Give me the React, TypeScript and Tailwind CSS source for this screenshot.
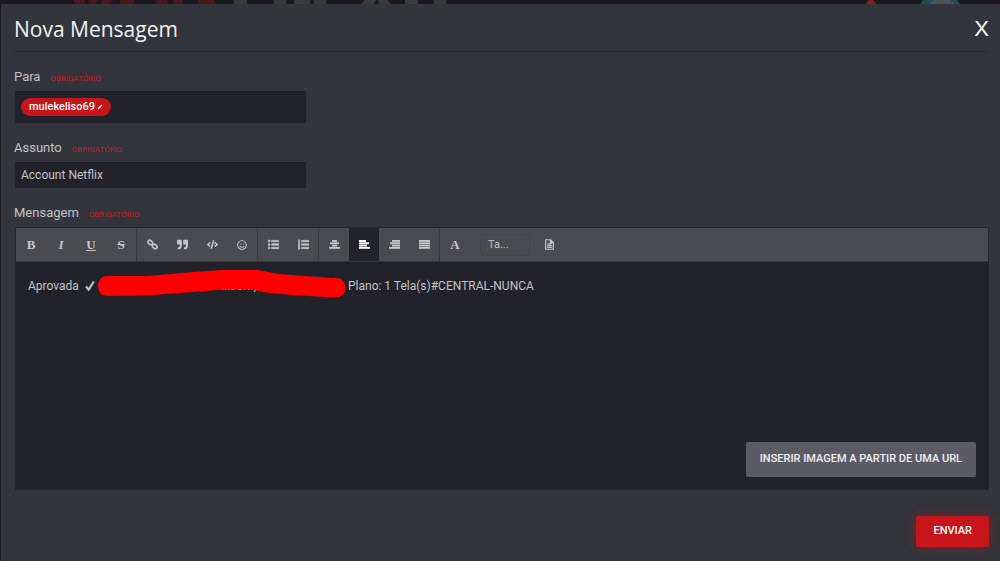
import type { ReactNode } from "react";
import { FaCode, FaListOl, FaListUl, FaQuoteRight, FaRegSmile } from "react-icons/fa";

type Tool = { label: string; icon: ReactNode; active?: boolean };

// Four stacked bars, each given as [x, width] on an 11-unit grid.
function Bars({ rows }: { rows: [number, number][] }) {
  return (
    <svg viewBox="0 0 11 9" className="h-[9px] w-[11px]" fill="currentColor" aria-hidden="true">
      {rows.map(([x, w], i) => (
        <rect key={i} x={x} y={i * 2.3} width={w} height={1.9} />
      ))}
    </svg>
  );
}

function ChainIcon() {
  return (
    <svg viewBox="0 0 12 12" className="size-[11px]" fill="none" stroke="currentColor" strokeWidth="1.8" aria-hidden="true">
      <rect x="0.9" y="1.8" width="5.4" height="4" rx="1.9" transform="rotate(40 3.6 3.8)" />
      <rect x="5.7" y="6.2" width="5.4" height="4" rx="1.9" transform="rotate(40 8.4 8.2)" />
    </svg>
  );
}

function DocumentIcon() {
  return (
    <svg viewBox="0 0 10 12" className="h-[11px] w-[9px]" fill="none" stroke="currentColor" strokeWidth="1.3" aria-hidden="true">
      <path d="M0.7 0.7H6.2L9.3 3.8V11.3H0.7Z M6 0.7V4H9.3 M2.5 5.3H7.5 M2.5 7.2H7.5 M2.5 9.1H7.5" />
    </svg>
  );
}

const groups: Tool[][] = [
  [
    { label: "Negrito", icon: <span className="font-bold">B</span> },
    { label: "Itálico", icon: <span className="font-bold italic">I</span> },
    { label: "Sublinhado", icon: <span className="font-bold underline underline-offset-1">U</span> },
    { label: "Tachado", icon: <span className="font-bold line-through">S</span> },
  ],
  [
    { label: "Link", icon: <ChainIcon /> },
    { label: "Citação", icon: <FaQuoteRight className="size-[11px]" /> },
    { label: "Código", icon: <FaCode className="size-[11px]" /> },
    { label: "Emoticons", icon: <FaRegSmile className="size-[10px]" /> },
  ],
  [
    { label: "Lista", icon: <FaListUl className="size-[11px]" stroke="currentColor" strokeWidth="30" /> },
    { label: "Lista numerada", icon: <FaListOl className="size-[11px]" stroke="currentColor" strokeWidth="30" /> },
  ],
  [
    { label: "Centralizar", icon: <Bars rows={[[3, 5], [1, 9], [3, 5], [0, 11]]} /> },
    { label: "Alinhar à esquerda", icon: <Bars rows={[[0, 7], [0, 10], [0, 8], [0, 11]]} />, active: true },
    { label: "Alinhar à direita", icon: <Bars rows={[[3, 8], [1, 10], [3, 8], [0, 11]]} /> },
    { label: "Justificar", icon: <Bars rows={[[0, 11], [0, 11], [0, 11], [0, 11]]} /> },
  ],
];

function ToolButton({ label, icon, active }: Tool) {
  return (
    <button
      type="button"
      aria-label={label}
      aria-pressed={active ? true : undefined}
      className={
        active
          ? "flex w-[30px] items-center justify-center bg-[#22222b] text-white"
          : "flex w-[30px] items-center justify-center font-['Liberation_Serif',serif] text-[13px] text-[#c4c5c8]"
      }
    >
      {icon}
    </button>
  );
}

function FieldLabel({ htmlFor, id, children }: { htmlFor?: string; id?: string; children: string }) {
  return (
    <label htmlFor={htmlFor} id={id} className="flex items-baseline gap-[10px] text-[13px] leading-5 text-[#c3c4c6]">
      {children}
      <span className="text-[8px] text-[#c4202a]">OBRIGATÓRIO</span>
    </label>
  );
}

function PageStrip() {
  return (
    <svg className="block h-1 w-full" aria-hidden="true">
      <path
        fill="#4a161b"
        d="M73 0h11l2 4H76zM88 0h10l-2 4h-7zM102 0h11l-3 4h-9zM120 0h14v4h-14zM155 0h12l2 4h-12zM173 0h10v4h-10zM197 0h17l3 4h-18z"
      />
      <path
        fill="#393a3a"
        d="M234 0h13v4h-13zM274 0h12v4h-12zM294 0h16v4h-16zM314 0h12v4h-12zM364 0h12l-2 4h-12zM378 0h10l2 4h-11zM405 0h13v4h-13zM434 0h12v4h-12z"
      />
      <circle cx="871" cy="5" r="5" fill="#8c1c22" />
      <circle cx="940" cy="14" r="22" fill="#244d5c" />
      <circle cx="942" cy="14" r="16" fill="#4b545b" />
    </svg>
  );
}

export default function App() {
  return (
    <div className="min-h-screen bg-[#1a181d] font-['Roboto',sans-serif]">
      <PageStrip />
      <main className="ml-px min-h-[557px] bg-[#32353b] pr-[11px] pl-[13px]">
        <header className="flex h-12 items-center justify-between border-b border-[#2b2d35] text-[#f2f2f3]">
          <h1 className="pt-0.5 font-['Open_Sans',sans-serif] text-[21px] leading-8">Nova Mensagem</h1>
          <button
            type="button"
            aria-label="Fechar"
            className="pt-0.5 font-['Liberation_Sans',sans-serif] text-[22px] leading-8 text-white"
          >
            X
          </button>
        </header>

        <form onSubmit={(e) => e.preventDefault()} className="pt-[15px]">
          <FieldLabel htmlFor="para">Para</FieldLabel>
          <div className="mt-0.5 ml-px flex h-8 max-w-[291px] items-center bg-[#22222b] px-[6px]">
            <button
              type="button"
              className="flex h-[18px] shrink-0 items-center gap-[2px] rounded-full bg-[#c8141b] px-2 text-[11px] font-medium text-white"
            >
              mulekeliso69
              <svg viewBox="0 0 6 6" className="size-[6px]" aria-hidden="true">
                <path d="M1 5 L5 1" stroke="currentColor" strokeWidth="1.5" />
              </svg>
            </button>
            <input id="para" className="min-w-0 flex-1 bg-transparent text-[12px] text-[#c3c4c6] outline-none" />
          </div>

          <div className="mt-[15px]">
            <FieldLabel htmlFor="assunto">Assunto</FieldLabel>
            <input
              id="assunto"
              defaultValue="Account Netflix"
              className="mt-0.5 ml-px block h-[26px] w-full max-w-[291px] bg-[#22222b] px-[6px] text-[12px] text-[#c3c4c6] outline-none"
            />
          </div>

          <div className="mt-[15px]">
            <FieldLabel id="mensagem">Mensagem</FieldLabel>
            <section className="mt-0.5 ml-px flex h-[263px] flex-col border border-[#26272d] bg-[#22222b]">
              <div className="flex h-[34px] shrink-0 border-b border-[#35363e] bg-[#494b51]">
                {groups.map((group, i) => (
                  <div key={i} className="flex border-r border-[#3a3b42]">
                    {group.map((tool) => (
                      <ToolButton key={tool.label} {...tool} />
                    ))}
                  </div>
                ))}
                <ToolButton label="Cor do texto" icon={<span className="font-bold">A</span>} />
                <select
                  aria-label="Tamanho"
                  className="mr-1 ml-[10px] w-[50px] appearance-none self-center rounded-sm border border-[#44464d] bg-transparent px-[7px] text-[11px] leading-5 text-[#c3c4c6]"
                >
                  <option>Ta...</option>
                </select>
                <ToolButton label="Modelos" icon={<DocumentIcon />} />
              </div>

              <div
                role="textbox"
                aria-multiline="true"
                aria-labelledby="mensagem"
                contentEditable
                suppressContentEditableWarning
                className="flex flex-1 items-start px-3 pt-[14px] text-[12px] leading-5 text-[#c3c4c6] outline-none"
              >
                <span className="flex w-[69px] shrink-0 items-center gap-[6px]">
                  Aprovada
                  <svg viewBox="0 0 10 11" className="h-[11px] w-[10px]" aria-label="✓">
                    <path d="M1 5.5 L3.6 8.7 L8.8 0.5" fill="none" stroke="currentColor" strokeWidth="2.1" />
                  </svg>
                </span>
                <span className="relative w-[251px] shrink-0 pl-[124px]">
                  il.com,
                  <svg
                    viewBox="97 269 250 30"
                    className="absolute top-[-7px] left-0 h-[30px] w-[250px]"
                    aria-hidden="true"
                  >
                    <path
                      fill="#fe0000"
                      d="M107 276 L147 276 L165 274.5 L193 272 L222 270 L258 270 L276 273.5 L291 275 L333 278 C349 276 350 298 335 297.5 L292 295 L266 292.5 L252 289.5 L222 289.5 L193 292 L165 294 L147 295.5 L107 296 C95 296 95 276 107 276Z"
                    />
                  </svg>
                </span>
                <span className="whitespace-nowrap">Plano: 1 Tela(s)#CENTRAL-NUNCA</span>
              </div>

              <div className="flex justify-end pr-3 pb-3">
                <button
                  type="button"
                  className="h-[35px] rounded-xs bg-[#5a5b64] px-[14px] text-[11px] font-medium text-[#f0f0f2]"
                >
                  INSERIR IMAGEM A PARTIR DE UMA URL
                </button>
              </div>
            </section>
          </div>

          <div className="flex justify-end pt-[26px] pb-[13px]">
            <button
              type="submit"
              className="h-[31px] rounded-xs bg-[#c8141b] px-[17px] text-[11px] font-medium text-white shadow-[0_0_12px_rgba(200,20,27,0.45)]"
            >
              ENVIAR
            </button>
          </div>
        </form>
      </main>
    </div>
  );
}
